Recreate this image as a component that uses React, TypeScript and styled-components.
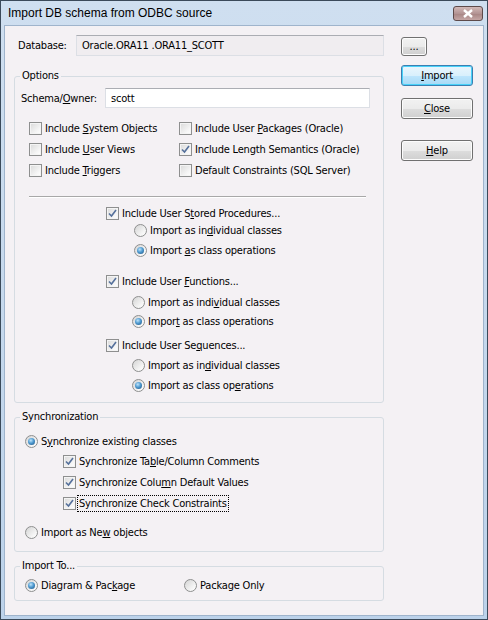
import React from 'react'
import styled, { createGlobalStyle } from 'styled-components'

const GlobalStyle = createGlobalStyle`
	html, body {
		margin: 0;
		padding: 0;
		background: #ffffff;
	}
	body {
		font-family: Tahoma, 'DejaVu Sans Condensed', 'DejaVu Sans', sans-serif;
		font-size: 11px;
		letter-spacing: -0.2px;
		color: #000;
	}
`

const Window = styled.div`
	width: 488px;
	height: 620px;
	box-sizing: border-box;
	border: 1px solid #3b4a5a;
	background: linear-gradient(#cfdff0, #bcd2ea);
	padding: 0 3px 3px 3px;
	display: flex;
	flex-direction: column;
`

const TitleBar = styled.div`
	height: 24px;
	display: flex;
	align-items: center;
	justify-content: space-between;
	padding: 0 0 0 4px;
	font-family: 'Liberation Sans', Arial, sans-serif;
	font-size: 12px;
	letter-spacing: 0;
	color: #000;
`

const CloseBox = styled.div`
	width: 30px;
	height: 15px;
	margin-right: 1px;
	box-sizing: border-box;
	border: 1px solid #5d4a4a;
	border-radius: 3px;
	background: linear-gradient(#d2b9b8, #b39494 50%, #a68483 51%, #c4a6a5);
	display: flex;
	align-items: center;
	justify-content: center;
`

const Client = styled.div`
	flex: 1;
	background: #f4f1f4;
	border: 1px solid #9fb4cc;
	display: grid;
	grid-template-columns: 370px 72px;
	column-gap: 17px;
	padding: 9px 0 0 9px;
	align-items: start;
`

const LeftCol = styled.div`
	display: flex;
	flex-direction: column;
`

const RightCol = styled.div`
	display: flex;
	flex-direction: column;
	align-items: flex-start;
`

const DbRow = styled.div`
	display: flex;
	align-items: center;
	height: 21px;
	padding-left: 4px;
`

const FieldLabel = styled.span<{ $w: number }>`
	width: ${p => p.$w}px;
	flex-shrink: 0;
`

const TextBox = styled.div<{ $w: number; $readonly?: boolean }>`
	width: ${p => p.$w}px;
	height: ${p => (p.$readonly ? 21 : 20)}px;
	box-sizing: border-box;
	border: 1px solid #dcdfe5;
	border-top-color: #abadb3;
	background: ${p => (p.$readonly ? '#f0edf0' : '#ffffff')};
	padding-left: 5px;
	display: flex;
	align-items: center;
`

const Group = styled.fieldset<{ $mt: number; $pb: number }>`
	margin: ${p => p.$mt}px 0 0 0;
	padding: 0 0 ${p => p.$pb}px 0;
	border: 1px solid #d5dce2;
	border-radius: 3px;
	min-width: 0;
`

const Legend = styled.legend`
	margin-left: 5px;
	padding: 0 2px;
	line-height: 14px;
`

const Row = styled.div<{ $mt?: number; $ml: number; $h?: number }>`
	display: flex;
	align-items: center;
	height: ${p => p.$h ?? 20}px;
	margin-top: ${p => p.$mt ?? 0}px;
	padding-left: ${p => p.$ml}px;
`

const TwoCols = styled.div`
	display: grid;
	grid-template-columns: 150px 1fr;
	grid-auto-rows: 21px;
	margin-top: 10px;
	padding-left: 14px;
	align-items: center;
`

const Separator = styled.div`
	margin: 15px 17px 0 14px;
	height: 0;
	border-top: 1px solid #a8a8a8;
	border-bottom: 1px solid #ffffff;
`

const Choice = styled.label<{ $focus?: boolean }>`
	display: inline-flex;
	align-items: center;
	gap: 2px;
	white-space: nowrap;
	& > span:last-child {
		outline: ${p => (p.$focus ? '1px dotted #000' : 'none')};
		outline-offset: 0;
		padding: 0 1px;
		line-height: 15px;
	}
`

const Box = styled.span`
	width: 13px;
	height: 13px;
	box-sizing: border-box;
	border: 1px solid #8e8f8f;
	background: linear-gradient(135deg, #d9d9d9, #f6f6f6 70%, #ffffff);
	box-shadow: inset 0 0 0 1px #f4f4f4;
	display: inline-flex;
	align-items: center;
	justify-content: center;
	flex-shrink: 0;
`

const Round = styled.span<{ $on?: boolean }>`
	width: 13px;
	height: 13px;
	box-sizing: border-box;
	border: 1px solid #8e8f8f;
	border-radius: 50%;
	background: linear-gradient(135deg, #d4d4d4, #f5f5f5 70%, #ffffff);
	display: inline-flex;
	align-items: center;
	justify-content: center;
	flex-shrink: 0;
	&::after {
		content: '';
		display: ${p => (p.$on ? 'block' : 'none')};
		width: 7px;
		height: 7px;
		border-radius: 50%;
		background: radial-gradient(circle at 40% 35%, #bfe4fb 0%, #4f9ad0 45%, #1b4f7e 100%);
	}
`

const Button = styled.div<{ $default?: boolean; $w?: number; $h?: number; $mt: number }>`
	width: ${p => p.$w ?? 72}px;
	height: ${p => p.$h ?? 21}px;
	margin-top: ${p => p.$mt}px;
	box-sizing: border-box;
	border: 1px solid ${p => (p.$default ? '#3c7fb1' : '#707070')};
	border-radius: 3px;
	box-shadow: inset 0 0 0 1px ${p => (p.$default ? '#48d2f9' : '#fcfcfc')};
	background: ${p =>
		p.$default
			? 'linear-gradient(#eaf6fd, #d9f0fc 50%, #bee6fd 51%, #a7d9f5)'
			: 'linear-gradient(#f2f2f2, #ebebeb 50%, #dddddd 51%, #cfcfcf)'};
	display: flex;
	align-items: center;
	justify-content: center;
	padding-bottom: 1px;
`

const Spacer = styled.span`
	width: 48px;
	flex-shrink: 0;
`

const CheckMark = () => (
	<svg width='9' height='9' viewBox='0 0 9 9'>
		<path d='M1 4.5 L3.5 7 L8 1' fill='none' stroke='#55709b' strokeWidth='1.6' />
	</svg>
)

type ChoiceProps = {
	on?: boolean
	focus?: boolean
	children: React.ReactNode
}

const Check = ({ on, focus, children }: ChoiceProps) => (
	<Choice $focus={focus}>
		<Box>{on && <CheckMark />}</Box>
		<span>{children}</span>
	</Choice>
)

const Radio = ({ on, children }: ChoiceProps) => (
	<Choice>
		<Round $on={on} />
		<span>{children}</span>
	</Choice>
)

const App = () => {
	return (
		<>
			<GlobalStyle />
			<Window>
				<TitleBar>
					<span>Import DB schema from ODBC source</span>
					<CloseBox>
						<svg width='12' height='9' viewBox='0 0 12 9'>
							<path d='M2 1 L10 8 M10 1 L2 8' stroke='#ffffff' strokeWidth='2.4' />
						</svg>
					</CloseBox>
				</TitleBar>
				<Client>
					<LeftCol>
						<DbRow>
							<FieldLabel $w={58}>Database:</FieldLabel>
							<TextBox $w={309} $readonly>
								Oracle.ORA11 .ORA11_SCOTT
							</TextBox>
						</DbRow>

						<Group $mt={13} $pb={7}>
							<Legend>Options</Legend>
							<Row $mt={5} $ml={6}>
								<FieldLabel $w={84}>
									Schema/<u>O</u>wner:
								</FieldLabel>
								<TextBox $w={265}>scott</TextBox>
							</Row>
							<TwoCols>
								<Check>
									Include <u>S</u>ystem Objects
								</Check>
								<Check>
									Include User <u>P</u>ackages (Oracle)
								</Check>
								<Check>
									Include <u>U</u>ser Views
								</Check>
								<Check on>Include Length Semantics (Oracle)</Check>
								<Check>
									Include <u>T</u>riggers
								</Check>
								<Check>Default Constraints (SQL Server)</Check>
							</TwoCols>
							<Separator />
							<Row $mt={5} $ml={91}>
								<Check on>
									Include User S<u>t</u>ored Procedures...
								</Check>
							</Row>
							<Row $mt={-3} $ml={119}>
								<Radio>
									Import as in<u>d</u>ividual classes
								</Radio>
							</Row>
							<Row $ml={119}>
								<Radio on>
									Import <u>a</u>s class operations
								</Radio>
							</Row>
							<Row $mt={11} $ml={91}>
								<Check on>
									Include User <u>F</u>unctions...
								</Check>
							</Row>
							<Row $mt={1} $ml={117}>
								<Radio>
									Import as indi<u>v</u>idual classes
								</Radio>
							</Row>
							<Row $h={19} $ml={117}>
								<Radio on>
									Impor<u>t</u> as class operations
								</Radio>
							</Row>
							<Row $mt={4} $ml={91}>
								<Check on>
									Include User Se<u>q</u>uences...
								</Check>
							</Row>
							<Row $ml={117}>
								<Radio>
									Import as in<u>d</u>ividual classes
								</Radio>
							</Row>
							<Row $ml={117}>
								<Radio on>
									Import as class op<u>e</u>rations
								</Radio>
							</Row>
						</Group>

						<Group $mt={7} $pb={9}>
							<Legend>Synchronization</Legend>
							<Row $mt={7} $ml={10}>
								<Radio on>
									S<u>y</u>nchronize existing classes
								</Radio>
							</Row>
							<Row $h={21} $ml={48}>
								<Check on>
									Synchronize Ta<u>b</u>le/Column Comments
								</Check>
							</Row>
							<Row $h={21} $ml={48}>
								<Check on>
									Synchronize Colu<u>m</u>n Default Values
								</Check>
							</Row>
							<Row $h={21} $ml={48}>
								<Check on focus>
									Synchronize Check Constraints
								</Check>
							</Row>
							<Row $mt={8} $ml={10}>
								<Radio>
									Import as Ne<u>w</u> objects
								</Radio>
							</Row>
						</Group>

						<Group $mt={7} $pb={5}>
							<Legend>Import To...</Legend>
							<Row $mt={2} $ml={10}>
								<Radio on>
									Diagram &amp; Pac<u>k</u>age
								</Radio>
								<Spacer />
								<Radio>Package Only</Radio>
							</Row>
						</Group>
					</LeftCol>

					<RightCol>
						<Button $w={26} $h={19} $mt={2}>
							...
						</Button>
						<Button $default $mt={9}>
							<u>I</u>mport
						</Button>
						<Button $mt={12}>
							<u>C</u>lose
						</Button>
						<Button $mt={21}>
							<u>H</u>elp
						</Button>
					</RightCol>
				</Client>
			</Window>
		</>
	)
}

export default App
